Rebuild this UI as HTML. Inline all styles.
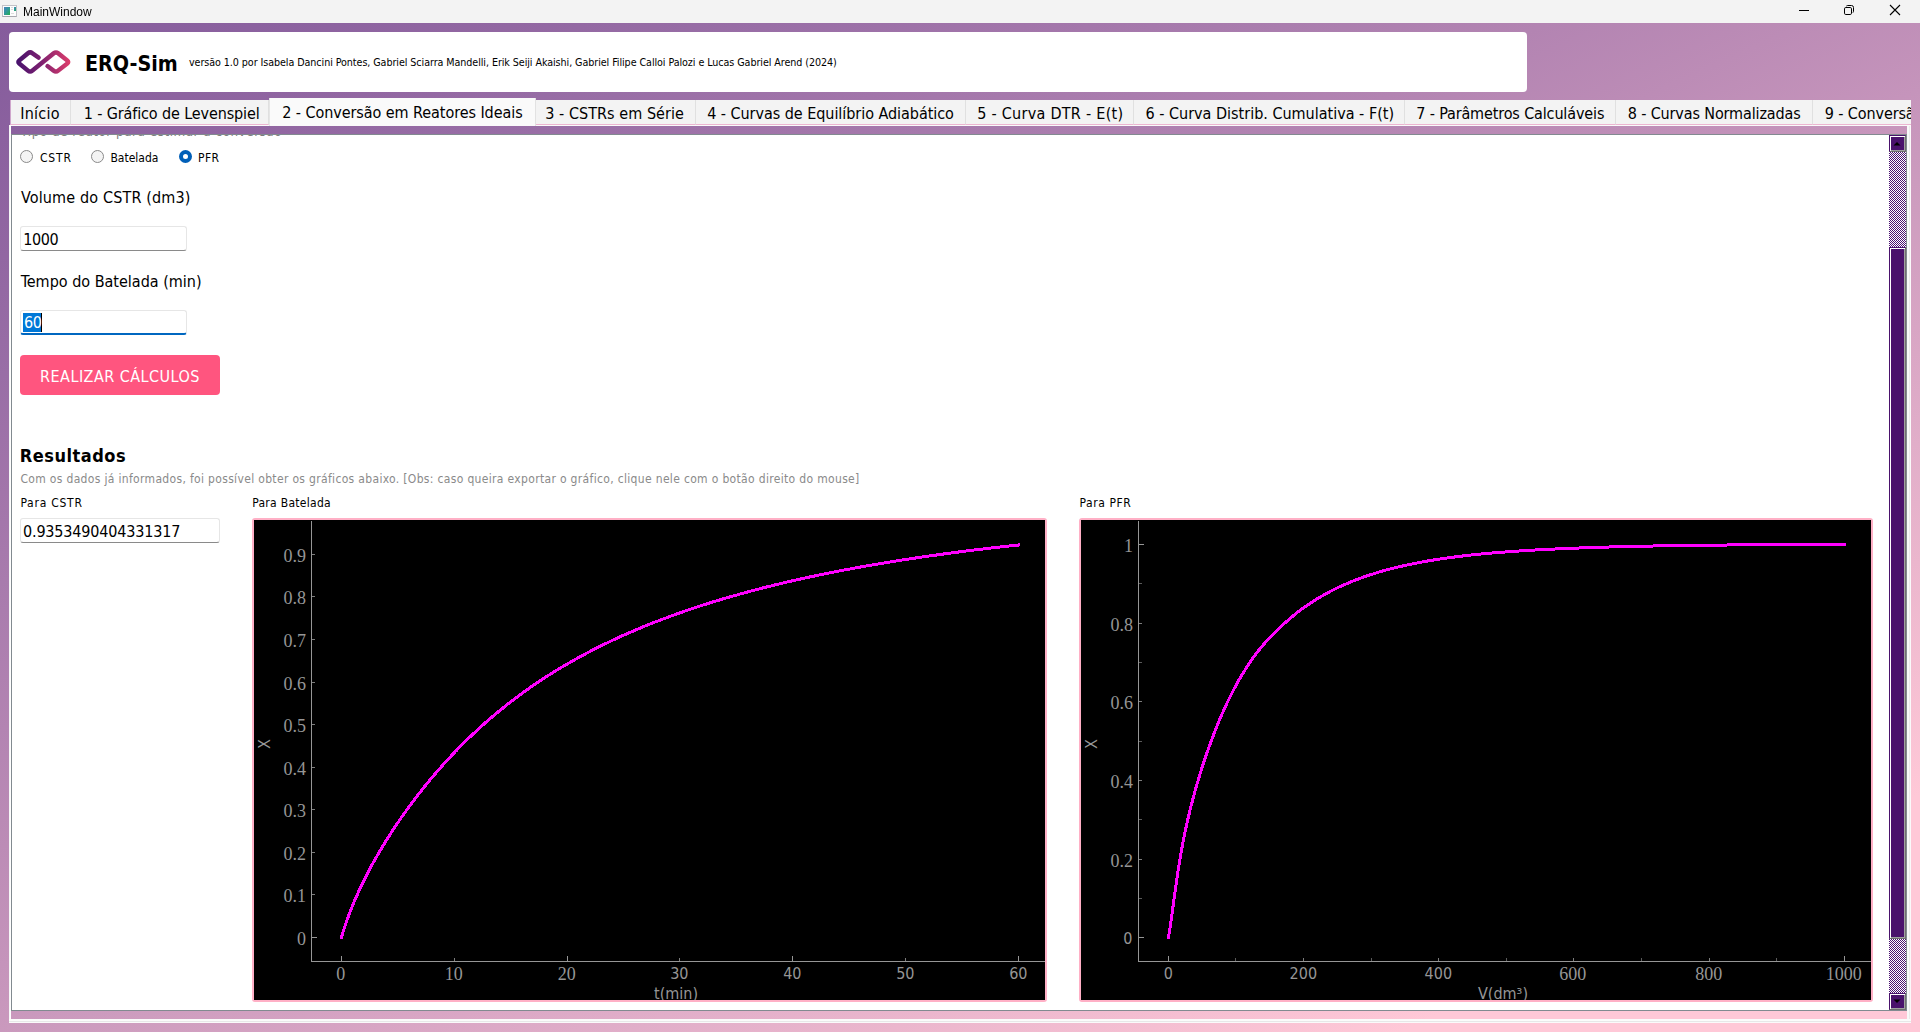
<!DOCTYPE html>
<html lang="pt-BR">
<head>
<meta charset="utf-8">
<title>MainWindow</title>
<style>
*{box-sizing:border-box;margin:0;padding:0}
html,body{width:1920px;height:1032px;overflow:hidden;background:#f3f3f3}
body{font-family:"DejaVu Sans Condensed","DejaVu Sans","Liberation Sans",sans-serif;font-stretch:condensed;color:#000;position:relative}
.abs{position:absolute;white-space:nowrap;line-height:1}
#titlebar{position:absolute;left:0;top:0;width:1920px;height:23px;background:#f3f3f3}
#title{position:absolute;left:22.800px;top:5px;font:12px "Liberation Sans",sans-serif;line-height:14px;color:#000;will-change:transform}
#central{position:absolute;left:0;top:23px;width:1920px;height:1009px;background:linear-gradient(155.47deg,rgb(133,92,156) 0.00%,rgb(139,97,159) 6.25%,rgb(146,103,162) 12.50%,rgb(153,110,166) 18.75%,rgb(162,117,170) 25.00%,rgb(170,125,174) 31.25%,rgb(179,132,178) 37.50%,rgb(188,140,182) 43.75%,rgb(197,148,187) 50.00%,rgb(206,157,191) 56.25%,rgb(216,165,196) 62.50%,rgb(225,174,201) 68.75%,rgb(235,182,205) 75.00%,rgb(245,191,210) 81.25%,rgb(255,200,215) 87.43%,rgb(255,200,215) 100%)}
#header{position:absolute;left:9px;top:32px;width:1518px;height:60px;background:#fff;border-radius:4px}
#brand{left:85px;top:53px;font-size:21.3px;font-weight:bold}
#authors{left:189px;top:58px;font-size:10.67px;letter-spacing:-0.068px}
/* tabs */
#tabbar{position:absolute;left:10px;top:98px;width:1901px;height:28px;overflow:hidden}
#tabbar .pt{position:absolute;left:0;top:27px;width:1901px;height:1px;background:#fafafa}
.tab{position:absolute;top:2px;height:25px;background:#f3f3f3;border-right:1px solid #e0e0e0;border-bottom:1px solid #ecb5d0;font-size:16px;line-height:1;white-space:nowrap}
.tab span{position:absolute;top:6.4px}
.tab.first{border-left:1px solid #cfa6cc}
.tab.sel{top:0;height:28px;background:#fafafa;border:none;border-left:1px solid #e6e6e6;border-right:1px solid #e2e2e2;z-index:2}
.tab.sel span{top:7.4px}
/* pane */
#paneL{position:absolute;left:9px;top:125px;width:2px;height:898px;background:linear-gradient(to right,#f6f8f7 0 50%,#fdfdfd 50% 100%)}
#paneR{position:absolute;left:1907px;top:126px;width:4px;height:897px;background:linear-gradient(to right,#f8faf9 0 50%,#e9ebea 50% 75%,#fafafa 75% 100%)}
#paneB{position:absolute;left:9px;top:1019px;width:1902px;height:4px;background:linear-gradient(to bottom,#fbfcfb 0 50%,#e7e8e8 50% 75%,#fafafa 75% 100%)}
#scroll{position:absolute;left:11px;top:134px;width:1896px;height:877px;background:#fff;border:1px solid #828a90;overflow:hidden}

/* content */
.c{position:absolute;white-space:nowrap;line-height:1;margin-left:.4px}
.f16{font-size:16px}.f12{font-size:12px}
.radio{position:absolute;width:13px;height:13px;border-radius:50%;border:1px solid #8a8a8a;background:#f4f4f4}
.radio.on{border:4px solid #005fb8;background:#fff}
.inp{position:absolute;background:#fff;border:1px solid #e6e6e6;border-bottom:1px solid #8a8a8a;border-radius:3px;font-size:16px}
.inp span{position:absolute;left:3px;top:4px;line-height:1}
#btn{position:absolute;left:8px;top:220px;width:200px;height:40px;background:#ff557f;border-radius:4px;color:#fff;font-size:16px;text-align:center;line-height:43px;letter-spacing:.47px}
.chart{position:absolute;top:383px;height:484px;background:#ffb0c6;border:2px solid #ffb0c6;border-radius:3px}
#sb{position:absolute;left:1877px;top:0;width:17px;height:875px;background:repeating-conic-gradient(#4b1370 0 25%,#fff 0 50%) 1px 0/2px 2px}
.sbb{position:absolute;left:0;width:17px;background:#4a126c;border:1px solid;border-color:#4a126c #6e6e6e #6e6e6e #4a126c;box-shadow:inset 1px 1px 0 #fff,inset -1px -1px 0 #a0a0a0}
</style>
</head>
<body>
<div id="titlebar"><div id="title">MainWindow</div><svg class="abs" style="left:0;top:0" width="1920" height="23" viewBox="0 0 1920 23">
<rect x="2.5" y="5.5" width="14" height="11" fill="#fdfdfd" stroke="#c2c2c8"/><path d="M2.500 16.500h14" stroke="#a8a8ae"/>
<defs><linearGradient id="ig" x1="0" y1="0" x2="1" y2="1"><stop offset="0" stop-color="#4a7fc0"/><stop offset=".5" stop-color="#2f9a98"/><stop offset="1" stop-color="#22b14c"/></linearGradient></defs><rect x="4" y="7" width="6" height="8" fill="url(#ig)"/>
<rect x="14" y="7" width="2" height="4" fill="url(#ig)"/><rect x="11" y="7" width="2" height="1" fill="#ddd"/><rect x="11" y="9" width="2" height="1" fill="#ddd"/><rect x="11" y="13" width="3" height="1" fill="#ddd"/>
<path d="M1799 10.5h10" stroke="#000" stroke-width="1" fill="none"/>
<rect x="1844.5" y="7.500" width="7" height="7" rx="1.3" stroke="#000" stroke-width="1" fill="none"/><path d="M1846.300 6.200q.5-.7 1.400-.7h3.800a2 2 0 0 1 2 2v3.800q0 .9-.7 1.400" stroke="#000" stroke-width="1" fill="none"/>
<path d="M1890 5l10 10M1900 5l-10 10" stroke="#000" stroke-width="1.1" fill="none"/>
</svg></div>
<div id="central"></div>
<div id="header"></div>
<svg class="abs" style="left:10px;top:42px" width="70" height="40" viewBox="10 42 70 40">
<defs><linearGradient id="lg" gradientUnits="userSpaceOnUse" x1="16" y1="0" x2="70" y2="0"><stop offset="0" stop-color="#43106c"/><stop offset="0.45" stop-color="#7a1f70"/><stop offset="1" stop-color="#e33f6b"/></linearGradient></defs>
<path d="M38.5 57.6 L32.6 53.2 Q30.5 51.6 28.4 53.3 L20.2 60.4 Q18.4 62 20.2 63.6 L28.4 70.6 Q30.5 72.4 32.6 70.6 L53.1 53.3 Q55.2 51.6 57.3 53.3 L65.9 60.4 Q67.8 62 65.9 63.6 L57.3 70.6 Q55.2 72.4 53.1 70.7 L47.2 66.1" transform="translate(43.05 62) scale(1.045 1.005) translate(-42.85 -62)" fill="none" stroke="url(#lg)" stroke-width="4.4" stroke-linecap="round" stroke-linejoin="round"/>
</svg>
<div class="abs" id="brand">ERQ-Sim</div>
<div class="abs" id="authors">versão 1.0 por Isabela Dancini Pontes, Gabriel Sciarra Mandelli, Erik Seiji Akaishi, Gabriel Filipe Calloi Palozi e Lucas Gabriel Arend (2024)</div>
<div id="tabbar">
<div class="pt"></div>
<div class="tab first" style="left:0px;width:61px"><span style="left:9.2px;letter-spacing:0.250px">Início</span></div>
<div class="tab" style="left:61px;width:198px"><span style="left:12.7px;letter-spacing:-0.120px">1 - Gráfico de Levenspiel</span></div>
<div class="tab sel" style="left:259px;width:267px"><span style="left:12.2px;letter-spacing:-0.062px">2 - Conversão em Reatores Ideais</span></div>
<div class="tab" style="left:526px;width:160px"><span style="left:9.2px;letter-spacing:0.056px">3 - CSTRs em Série</span></div>
<div class="tab" style="left:686px;width:270px"><span style="left:11.2px;letter-spacing:-0.043px">4 - Curvas de Equilíbrio Adiabático</span></div>
<div class="tab" style="left:956px;width:168px"><span style="left:11.2px;letter-spacing:0.275px">5 - Curva DTR - E(t)</span></div>
<div class="tab" style="left:1124px;width:271px"><span style="left:11.5px">6 - Curva Distrib. Cumulativa - F(t)</span></div>
<div class="tab" style="left:1395px;width:211px"><span style="left:11.2px;letter-spacing:-0.135px">7 - Parâmetros Calculáveis</span></div>
<div class="tab" style="left:1606px;width:197px"><span style="left:11.7px;letter-spacing:-0.130px">8 - Curvas Normalizadas</span></div>
<div class="tab" style="left:1803px;width:347px"><span style="left:11.7px;letter-spacing:-0.100px">9 - Conversão em Reatores Não Isotérmicos</span></div>
</div>
<div id="paneL"></div><div id="paneR"></div><div id="paneB"></div>
<div id="scroll">
<div class="c" id="clip" style="left:8px;top:-10px;color:#7c7c7c;font-size:13.33px;letter-spacing:.52px">Tipo de reator para estimar a conversão</div>
<div class="radio" style="left:8px;top:15px"></div><div class="c f12" style="left:27.5px;top:17px;letter-spacing:.85px">CSTR</div>
<div class="radio" style="left:79px;top:15px"></div><div class="c f12" style="left:98px;top:17px">Batelada</div>
<div class="radio on" style="left:167px;top:15px"></div><div class="c f12" style="left:185.5px;top:17px;letter-spacing:.5px">PFR</div>
<div class="c f16" style="left:8.6px;top:55px;letter-spacing:.15px">Volume do CSTR (dm3)</div>
<div class="inp" style="left:8px;top:91px;width:167px;height:25px"><span style="left:2.3px;top:5px;letter-spacing:-.4px">1000</span></div>
<div class="c f16" style="left:8.3px;top:139px">Tempo do Batelada (min)</div>
<div class="inp" style="left:8px;top:175px;width:167px;height:25px;border-bottom:2px solid #0067c0"><span style="background:#0078d7;color:#fff;left:2px;top:2px;height:19px;line-height:20px;padding:0 1px 0 1px;border-right:1px solid #000;width:19px;letter-spacing:-.3px">60</span></div>
<div id="btn">REALIZAR CÁLCULOS</div>
<div class="c" style="left:8px;top:312px;font-size:18px;font-weight:bold;letter-spacing:.5px;margin-left:-.2px">Resultados</div>
<div class="c f12" style="left:8px;top:338px;color:#8a8a8a;letter-spacing:.33px">Com os dados já informados, foi possível obter os gráficos abaixo. [Obs: caso queira exportar o gráfico, clique nele com o botão direito do mouse]</div>
<div class="c f12" style="left:8px;top:362px;letter-spacing:.75px">Para CSTR</div>
<div class="c f12" style="left:239.8px;top:362px;letter-spacing:.29px">Para Batelada</div>
<div class="c f12" style="left:1067px;top:362px;letter-spacing:.59px">Para PFR</div>
<div class="inp" style="left:8px;top:383px;width:200px;height:25px"><span style="left:2px;top:4.5px;letter-spacing:-.17px">0.9353490404331317</span></div>
<div class="chart" id="ch1" style="left:240px;width:795px"><svg width="791" height="480" viewBox="254 520 791 480" style="display:block;background:#000">
<g shape-rendering="crispEdges">
<rect x="311" y="521" width="1" height="441" fill="#969696"/>
<rect x="311" y="961" width="734" height="1" fill="#969696"/>
<rect x="312" y="937" width="5" height="1" fill="#969696"/>
<rect x="312" y="894" width="3" height="1" fill="#7c7c7c"/>
<rect x="312" y="852" width="3" height="1" fill="#7c7c7c"/>
<rect x="312" y="809" width="3" height="1" fill="#7c7c7c"/>
<rect x="312" y="767" width="3" height="1" fill="#7c7c7c"/>
<rect x="312" y="724" width="3" height="1" fill="#7c7c7c"/>
<rect x="312" y="682" width="3" height="1" fill="#7c7c7c"/>
<rect x="312" y="639" width="3" height="1" fill="#7c7c7c"/>
<rect x="312" y="596" width="3" height="1" fill="#7c7c7c"/>
<rect x="312" y="554" width="3" height="1" fill="#7c7c7c"/>
<rect x="341" y="956" width="1" height="5" fill="#969696"/>
<rect x="454" y="958" width="1" height="3" fill="#7c7c7c"/>
<rect x="567" y="956" width="1" height="5" fill="#969696"/>
<rect x="679" y="958" width="1" height="3" fill="#7c7c7c"/>
<rect x="792" y="956" width="1" height="5" fill="#969696"/>
<rect x="905" y="958" width="1" height="3" fill="#7c7c7c"/>
<rect x="1018" y="956" width="1" height="5" fill="#969696"/>
<path d="M341.5 937.4 L342.0 935.5 L342.6 933.6 L343.2 931.6 L343.8 929.7 L344.4 927.8 L345.0 925.9 L345.6 924.0 L346.3 922.1 L346.9 920.2 L347.6 918.4 L348.3 916.5 L349.0 914.6 L349.7 912.7 L350.4 910.9 L351.2 909.0 L351.9 907.2 L352.6 905.3 L353.4 903.4 L354.2 901.6 L355.0 899.8 L355.8 897.9 L356.6 896.1 L357.4 894.3 L358.2 892.4 L359.0 890.6 L359.9 888.8 L360.7 887.0 L361.6 885.2 L362.5 883.4 L363.3 881.6 L364.2 879.8 L365.1 878.0 L366.0 876.2 L366.9 874.5 L367.9 872.7 L368.8 870.9 L369.7 869.1 L370.7 867.4 L371.6 865.6 L372.6 863.9 L373.5 862.1 L374.5 860.4 L375.5 858.6 L376.5 856.9 L377.5 855.2 L378.5 853.4 L379.5 851.7 L380.5 850.0 L381.5 848.3 L382.6 846.5 L383.6 844.8 L384.6 843.1 L385.7 841.4 L386.7 839.7 L387.8 838.0 L388.9 836.3 L389.9 834.6 L391.0 833.0 L392.1 831.3 L393.2 829.6 L394.3 827.9 L395.4 826.3 L396.5 824.6 L397.7 823.0 L398.8 821.3 L399.9 819.7 L401.0 818.0 L402.2 816.4 L403.3 814.7 L404.5 813.1 L405.7 811.5 L406.8 809.8 L408.0 808.2 L409.2 806.6 L410.4 805.0 L411.5 803.4 L412.7 801.8 L413.9 800.2 L415.2 798.6 L416.4 797.0 L417.6 795.4 L418.8 793.8 L420.0 792.3 L421.3 790.7 L422.5 789.1 L423.8 787.6 L425.0 786.0 L426.3 784.5 L427.5 782.9 L428.8 781.4 L430.1 779.8 L431.4 778.3 L432.7 776.8 L434.0 775.2 L435.3 773.7 L436.6 772.2 L437.9 770.7 L439.2 769.2 L440.5 767.7 L441.8 766.2 L443.2 764.7 L444.5 763.2 L445.8 761.7 L447.2 760.2 L448.6 758.8 L449.9 757.3 L451.3 755.8 L452.6 754.4 L454.0 752.9 L455.4 751.5 L456.8 750.1 L458.2 748.6 L459.6 747.2 L461.0 745.8 L462.4 744.3 L463.8 742.9 L465.2 741.5 L466.7 740.1 L468.1 738.7 L469.5 737.3 L471.0 736.0 L472.4 734.6 L473.9 733.2 L475.4 731.8 L476.8 730.5 L478.3 729.1 L479.8 727.8 L481.2 726.4 L482.7 725.1 L484.2 723.8 L485.7 722.4 L487.2 721.1 L488.7 719.8 L490.3 718.5 L491.8 717.2 L493.3 715.9 L494.8 714.6 L496.4 713.3 L497.9 712.1 L499.4 710.8 L501.0 709.5 L502.6 708.3 L504.1 707.0 L505.7 705.8 L507.2 704.5 L508.8 703.3 L510.4 702.1 L512.0 700.9 L513.6 699.6 L515.2 698.4 L516.8 697.2 L518.4 696.0 L520.0 694.9 L521.6 693.7 L523.2 692.5 L524.8 691.3 L526.5 690.2 L528.1 689.0 L529.7 687.9 L531.4 686.7 L533.0 685.6 L534.7 684.4 L536.3 683.3 L538.0 682.2 L539.7 681.1 L541.3 680.0 L543.0 678.9 L544.7 677.8 L546.3 676.7 L548.0 675.6 L549.7 674.6 L551.4 673.5 L553.1 672.4 L554.8 671.4 L556.5 670.3 L558.2 669.3 L559.9 668.3 L561.6 667.2 L563.4 666.2 L565.1 665.2 L566.8 664.2 L568.6 663.2 L570.3 662.2 L572.0 661.2 L573.8 660.2 L575.5 659.3 L577.3 658.3 L579.0 657.3 L580.8 656.4 L582.5 655.4 L584.3 654.5 L586.1 653.5 L587.8 652.6 L589.6 651.7 L591.4 650.7 L593.1 649.8 L594.9 648.9 L596.7 648.0 L598.5 647.1 L600.3 646.2 L602.1 645.3 L603.9 644.4 L605.7 643.6 L607.5 642.7 L609.3 641.8 L611.1 641.0 L612.9 640.1 L614.7 639.3 L616.5 638.4 L618.3 637.6 L620.2 636.8 L622.0 635.9 L623.8 635.1 L625.6 634.3 L627.5 633.5 L629.3 632.7 L631.1 631.9 L633.0 631.1 L634.8 630.3 L636.6 629.6 L638.5 628.8 L640.3 628.0 L642.2 627.2 L644.0 626.5 L645.9 625.7 L647.7 625.0 L649.6 624.2 L651.5 623.5 L653.3 622.8 L655.2 622.0 L657.0 621.3 L658.9 620.6 L660.8 619.9 L662.6 619.2 L664.5 618.5 L666.4 617.8 L668.3 617.1 L670.1 616.4 L672.0 615.7 L673.9 615.0 L675.8 614.3 L677.7 613.7 L679.5 613.0 L681.4 612.3 L683.3 611.7 L685.2 611.0 L687.1 610.4 L689.0 609.7 L690.9 609.1 L692.8 608.4 L694.7 607.8 L696.6 607.2 L698.5 606.6 L700.4 605.9 L702.3 605.3 L704.2 604.7 L706.1 604.1 L708.0 603.5 L709.9 602.9 L711.8 602.3 L713.7 601.7 L715.7 601.1 L717.6 600.6 L719.5 600.0 L721.4 599.4 L723.3 598.8 L725.2 598.3 L727.2 597.7 L729.1 597.1 L731.0 596.6 L732.9 596.0 L734.8 595.5 L736.8 595.0 L738.7 594.4 L740.6 593.9 L742.5 593.3 L744.5 592.8 L746.4 592.3 L748.3 591.8 L750.3 591.2 L752.2 590.7 L754.1 590.2 L756.1 589.7 L758.0 589.2 L759.9 588.7 L761.9 588.2 L763.8 587.7 L765.8 587.2 L767.7 586.7 L769.6 586.3 L771.6 585.8 L773.5 585.3 L775.5 584.8 L777.4 584.4 L779.3 583.9 L781.3 583.4 L783.2 583.0 L785.2 582.5 L787.1 582.0 L789.1 581.6 L791.0 581.1 L793.0 580.7 L794.9 580.3 L796.9 579.8 L798.8 579.4 L800.8 578.9 L802.7 578.5 L804.7 578.1 L806.6 577.7 L808.6 577.2 L810.6 576.8 L812.5 576.4 L814.5 576.0 L816.4 575.6 L818.4 575.2 L820.3 574.7 L822.3 574.3 L824.3 573.9 L826.2 573.5 L828.2 573.1 L830.1 572.8 L832.1 572.4 L834.1 572.0 L836.0 571.6 L838.0 571.2 L840.0 570.8 L841.9 570.5 L843.9 570.1 L845.8 569.7 L847.8 569.3 L849.8 569.0 L851.7 568.6 L853.7 568.2 L855.7 567.9 L857.6 567.5 L859.6 567.2 L861.6 566.8 L863.5 566.5 L865.5 566.1 L867.5 565.8 L869.5 565.4 L871.4 565.1 L873.4 564.7 L875.4 564.4 L877.3 564.1 L879.3 563.7 L881.3 563.4 L883.3 563.1 L885.2 562.7 L887.2 562.4 L889.2 562.1 L891.2 561.8 L893.1 561.5 L895.1 561.1 L897.1 560.8 L899.1 560.5 L901.0 560.2 L903.0 559.9 L905.0 559.6 L907.0 559.3 L908.9 559.0 L910.9 558.7 L912.9 558.4 L914.9 558.1 L916.8 557.8 L918.8 557.5 L920.8 557.2 L922.8 556.9 L924.8 556.6 L926.7 556.4 L928.7 556.1 L930.7 555.8 L932.7 555.5 L934.7 555.2 L936.6 555.0 L938.6 554.7 L940.6 554.4 L942.6 554.1 L944.6 553.9 L946.6 553.6 L948.5 553.3 L950.5 553.1 L952.5 552.8 L954.5 552.6 L956.5 552.3 L958.5 552.0 L960.4 551.8 L962.4 551.5 L964.4 551.3 L966.4 551.0 L968.4 550.8 L970.4 550.5 L972.3 550.3 L974.3 550.0 L976.3 549.8 L978.3 549.6 L980.3 549.3 L982.3 549.1 L984.3 548.8 L986.2 548.6 L988.2 548.4 L990.2 548.1 L992.2 547.9 L994.2 547.7 L996.2 547.5 L998.2 547.2 L1000.1 547.0 L1002.1 546.8 L1004.1 546.6 L1006.1 546.4 L1008.1 546.1 L1010.1 545.9 L1012.1 545.7 L1014.1 545.5 L1016.1 545.3 L1018.0 545.1 L1018.5 545.0" fill="none" stroke="#f0f" stroke-width="3" stroke-linecap="square" stroke-linejoin="round"/>
</g>
<g fill="#969696">
<text x="306" y="945.0" text-anchor="end" font-family="Liberation Serif,serif" font-size="18">0</text>
<text x="306" y="902.0" text-anchor="end" font-family="Liberation Serif,serif" font-size="18">0.1</text>
<text x="306" y="860.0" text-anchor="end" font-family="Liberation Serif,serif" font-size="18">0.2</text>
<text x="306" y="817.0" text-anchor="end" font-family="Liberation Serif,serif" font-size="18">0.3</text>
<text x="306" y="775.0" text-anchor="end" font-family="Liberation Serif,serif" font-size="18">0.4</text>
<text x="306" y="732.0" text-anchor="end" font-family="Liberation Serif,serif" font-size="18">0.5</text>
<text x="306" y="690.0" text-anchor="end" font-family="Liberation Serif,serif" font-size="18">0.6</text>
<text x="306" y="647.0" text-anchor="end" font-family="Liberation Serif,serif" font-size="18">0.7</text>
<text x="306" y="604.0" text-anchor="end" font-family="Liberation Serif,serif" font-size="18">0.8</text>
<text x="306" y="562.0" text-anchor="end" font-family="Liberation Serif,serif" font-size="18">0.9</text>
<text x="340.8" y="980.4" text-anchor="middle" font-family="Liberation Serif,serif" font-size="18">0</text>
<text x="453.8" y="980.4" text-anchor="middle" font-family="Liberation Serif,serif" font-size="18">10</text>
<text x="566.8" y="980.4" text-anchor="middle" font-family="Liberation Serif,serif" font-size="18">20</text>
<text x="679.3" y="979.4" text-anchor="middle" font-family="DejaVu Sans Condensed,DejaVu Sans,Liberation Sans,sans-serif" font-stretch="condensed" font-size="16">30</text>
<text x="792.3" y="979.4" text-anchor="middle" font-family="DejaVu Sans Condensed,DejaVu Sans,Liberation Sans,sans-serif" font-stretch="condensed" font-size="16">40</text>
<text x="905.3" y="979.4" text-anchor="middle" font-family="DejaVu Sans Condensed,DejaVu Sans,Liberation Sans,sans-serif" font-stretch="condensed" font-size="16">50</text>
<text x="1018.3" y="979.4" text-anchor="middle" font-family="DejaVu Sans Condensed,DejaVu Sans,Liberation Sans,sans-serif" font-stretch="condensed" font-size="16">60</text>
<text x="676" y="999" text-anchor="middle" font-family="DejaVu Sans Condensed,DejaVu Sans,Liberation Sans,sans-serif" font-stretch="condensed" font-size="16">t(min)</text>
<text transform="translate(270 744) rotate(-90)" text-anchor="middle" font-family="DejaVu Sans Condensed,DejaVu Sans,Liberation Sans,sans-serif" font-stretch="condensed" font-size="16">X</text>
</g></svg></div>
<div class="chart" id="ch2" style="left:1067px;width:794px"><svg width="790" height="480" viewBox="1081 520 790 480" style="display:block;background:#000">
<g shape-rendering="crispEdges">
<rect x="1138" y="521" width="1" height="441" fill="#969696"/>
<rect x="1138" y="961" width="733" height="1" fill="#969696"/>
<rect x="1139" y="937" width="5" height="1" fill="#969696"/>
<rect x="1139" y="898" width="3" height="1" fill="#5a5a5a"/>
<rect x="1139" y="859" width="3" height="1" fill="#7c7c7c"/>
<rect x="1139" y="819" width="3" height="1" fill="#5a5a5a"/>
<rect x="1139" y="780" width="3" height="1" fill="#7c7c7c"/>
<rect x="1139" y="741" width="3" height="1" fill="#5a5a5a"/>
<rect x="1139" y="701" width="3" height="1" fill="#7c7c7c"/>
<rect x="1139" y="662" width="3" height="1" fill="#5a5a5a"/>
<rect x="1139" y="623" width="3" height="1" fill="#7c7c7c"/>
<rect x="1139" y="583" width="3" height="1" fill="#5a5a5a"/>
<rect x="1139" y="544" width="5" height="1" fill="#969696"/>
<rect x="1168" y="956" width="1" height="5" fill="#969696"/>
<rect x="1235" y="958" width="1" height="3" fill="#5a5a5a"/>
<rect x="1303" y="958" width="1" height="3" fill="#7c7c7c"/>
<rect x="1371" y="958" width="1" height="3" fill="#5a5a5a"/>
<rect x="1438" y="958" width="1" height="3" fill="#7c7c7c"/>
<rect x="1506" y="958" width="1" height="3" fill="#5a5a5a"/>
<rect x="1573" y="958" width="1" height="3" fill="#7c7c7c"/>
<rect x="1641" y="958" width="1" height="3" fill="#5a5a5a"/>
<rect x="1709" y="958" width="1" height="3" fill="#7c7c7c"/>
<rect x="1776" y="958" width="1" height="3" fill="#5a5a5a"/>
<rect x="1844" y="956" width="1" height="5" fill="#969696"/>
<path d="M1168.5 937.5 L1168.8 935.5 L1169.1 933.6 L1169.5 931.6 L1169.8 929.6 L1170.1 927.6 L1170.4 925.6 L1170.6 923.7 L1170.9 921.7 L1171.2 919.7 L1171.5 917.7 L1171.8 915.7 L1172.0 913.8 L1172.3 911.8 L1172.6 909.8 L1172.8 907.8 L1173.1 905.8 L1173.4 903.9 L1173.6 901.9 L1173.9 899.9 L1174.2 897.9 L1174.4 895.9 L1174.7 893.9 L1175.0 892.0 L1175.3 890.0 L1175.5 888.0 L1175.8 886.0 L1176.1 884.0 L1176.4 882.1 L1176.7 880.1 L1177.0 878.1 L1177.2 876.1 L1177.5 874.1 L1177.8 872.2 L1178.1 870.2 L1178.5 868.2 L1178.8 866.2 L1179.1 864.3 L1179.4 862.3 L1179.7 860.3 L1180.1 858.3 L1180.4 856.4 L1180.8 854.4 L1181.1 852.4 L1181.5 850.5 L1181.8 848.5 L1182.2 846.5 L1182.6 844.6 L1182.9 842.6 L1183.3 840.6 L1183.7 838.7 L1184.1 836.7 L1184.5 834.8 L1184.9 832.8 L1185.3 830.8 L1185.7 828.9 L1186.2 826.9 L1186.6 825.0 L1187.0 823.0 L1187.5 821.1 L1187.9 819.1 L1188.4 817.2 L1188.8 815.2 L1189.3 813.3 L1189.8 811.3 L1190.2 809.4 L1190.7 807.5 L1191.2 805.5 L1191.7 803.6 L1192.2 801.6 L1192.7 799.7 L1193.2 797.8 L1193.7 795.8 L1194.3 793.9 L1194.8 792.0 L1195.3 790.1 L1195.9 788.1 L1196.4 786.2 L1197.0 784.3 L1197.5 782.4 L1198.1 780.5 L1198.7 778.5 L1199.2 776.6 L1199.8 774.7 L1200.4 772.8 L1201.0 770.9 L1201.6 769.0 L1202.2 767.1 L1202.8 765.2 L1203.5 763.3 L1204.1 761.4 L1204.7 759.5 L1205.3 757.6 L1206.0 755.7 L1206.6 753.8 L1207.3 751.9 L1208.0 750.0 L1208.6 748.1 L1209.3 746.2 L1210.0 744.4 L1210.7 742.5 L1211.4 740.6 L1212.1 738.7 L1212.8 736.9 L1213.5 735.0 L1214.2 733.1 L1214.9 731.3 L1215.6 729.4 L1216.4 727.5 L1217.1 725.7 L1217.9 723.8 L1218.7 722.0 L1219.4 720.1 L1220.2 718.3 L1221.0 716.5 L1221.8 714.6 L1222.6 712.8 L1223.4 711.0 L1224.2 709.1 L1225.0 707.3 L1225.9 705.5 L1226.7 703.7 L1227.6 701.9 L1228.4 700.1 L1229.3 698.3 L1230.2 696.5 L1231.1 694.7 L1232.0 692.9 L1232.9 691.1 L1233.8 689.4 L1234.8 687.6 L1235.7 685.8 L1236.7 684.1 L1237.6 682.3 L1238.6 680.6 L1239.6 678.8 L1240.6 677.1 L1241.6 675.4 L1242.7 673.7 L1243.7 672.0 L1244.8 670.3 L1245.8 668.6 L1246.9 666.9 L1248.0 665.2 L1249.1 663.6 L1250.2 661.9 L1251.4 660.3 L1252.5 658.6 L1253.7 657.0 L1254.9 655.4 L1256.1 653.8 L1257.3 652.2 L1258.5 650.6 L1259.8 649.1 L1261.1 647.5 L1262.3 646.0 L1263.6 644.5 L1264.9 643.0 L1266.3 641.5 L1267.6 640.0 L1269.0 638.5 L1270.3 637.0 L1271.7 635.6 L1273.1 634.1 L1274.5 632.7 L1275.9 631.3 L1277.3 629.9 L1278.8 628.5 L1280.2 627.1 L1281.7 625.8 L1283.2 624.4 L1284.7 623.1 L1286.2 621.8 L1287.7 620.5 L1289.2 619.2 L1290.7 617.9 L1292.3 616.6 L1293.8 615.3 L1295.4 614.1 L1296.9 612.8 L1298.5 611.6 L1300.1 610.4 L1301.7 609.2 L1303.3 608.0 L1304.9 606.9 L1306.6 605.7 L1308.2 604.6 L1309.9 603.5 L1311.6 602.4 L1313.2 601.3 L1314.9 600.2 L1316.6 599.1 L1318.3 598.1 L1320.1 597.1 L1321.8 596.1 L1323.5 595.1 L1325.3 594.1 L1327.0 593.1 L1328.8 592.2 L1330.5 591.3 L1332.3 590.3 L1334.1 589.4 L1335.9 588.6 L1337.7 587.7 L1339.5 586.8 L1341.3 586.0 L1343.2 585.2 L1345.0 584.4 L1346.8 583.6 L1348.7 582.8 L1350.5 582.0 L1352.4 581.3 L1354.2 580.5 L1356.1 579.8 L1358.0 579.1 L1359.8 578.4 L1361.7 577.7 L1363.6 577.0 L1365.5 576.4 L1367.4 575.7 L1369.3 575.1 L1371.2 574.5 L1373.1 573.9 L1375.0 573.3 L1376.9 572.7 L1378.8 572.1 L1380.7 571.6 L1382.7 571.0 L1384.6 570.5 L1386.5 569.9 L1388.4 569.4 L1390.4 568.9 L1392.3 568.4 L1394.3 567.9 L1396.2 567.5 L1398.1 567.0 L1400.1 566.5 L1402.0 566.1 L1404.0 565.6 L1405.9 565.2 L1407.9 564.8 L1409.9 564.4 L1411.8 564.0 L1413.8 563.6 L1415.7 563.2 L1417.7 562.8 L1419.7 562.4 L1421.6 562.1 L1423.6 561.7 L1425.6 561.4 L1427.5 561.0 L1429.5 560.7 L1431.5 560.4 L1433.5 560.0 L1435.4 559.7 L1437.4 559.4 L1439.4 559.1 L1441.4 558.8 L1443.3 558.5 L1445.3 558.2 L1447.3 558.0 L1449.3 557.7 L1451.3 557.4 L1453.2 557.2 L1455.2 556.9 L1457.2 556.7 L1459.2 556.4 L1461.2 556.2 L1463.2 555.9 L1465.2 555.7 L1467.1 555.5 L1469.1 555.3 L1471.1 555.0 L1473.1 554.8 L1475.1 554.6 L1477.1 554.4 L1479.1 554.2 L1481.1 554.0 L1483.1 553.8 L1485.0 553.6 L1487.0 553.5 L1489.0 553.3 L1491.0 553.1 L1493.0 552.9 L1495.0 552.8 L1497.0 552.6 L1499.0 552.4 L1501.0 552.3 L1503.0 552.1 L1505.0 552.0 L1507.0 551.8 L1509.0 551.7 L1511.0 551.5 L1513.0 551.4 L1515.0 551.2 L1516.9 551.1 L1518.9 551.0 L1520.9 550.8 L1522.9 550.7 L1524.9 550.6 L1526.9 550.5 L1528.9 550.3 L1530.9 550.2 L1532.9 550.1 L1534.9 550.0 L1536.9 549.9 L1538.9 549.8 L1540.9 549.7 L1542.9 549.5 L1544.9 549.4 L1546.9 549.3 L1548.9 549.2 L1550.9 549.1 L1552.9 549.1 L1554.9 549.0 L1556.9 548.9 L1558.9 548.8 L1560.9 548.7 L1562.9 548.6 L1564.9 548.5 L1566.9 548.4 L1568.9 548.3 L1570.9 548.3 L1572.9 548.2 L1574.9 548.1 L1576.9 548.0 L1578.9 548.0 L1580.9 547.9 L1582.9 547.8 L1584.9 547.7 L1586.9 547.7 L1588.9 547.6 L1590.9 547.5 L1592.9 547.5 L1594.9 547.4 L1596.9 547.3 L1598.9 547.3 L1600.9 547.2 L1602.9 547.2 L1604.9 547.1 L1606.8 547.0 L1608.8 547.0 L1610.8 546.9 L1612.8 546.9 L1614.8 546.8 L1616.8 546.8 L1618.8 546.7 L1620.8 546.7 L1622.8 546.6 L1624.8 546.6 L1626.8 546.5 L1628.8 546.5 L1630.8 546.4 L1632.8 546.4 L1634.8 546.3 L1636.8 546.3 L1638.8 546.3 L1640.8 546.2 L1642.8 546.2 L1644.8 546.1 L1646.8 546.1 L1648.8 546.1 L1650.8 546.0 L1652.8 546.0 L1654.8 545.9 L1656.8 545.9 L1658.8 545.9 L1660.8 545.8 L1662.8 545.8 L1664.8 545.8 L1666.8 545.7 L1668.8 545.7 L1670.8 545.7 L1672.8 545.6 L1674.8 545.6 L1676.8 545.6 L1678.8 545.5 L1680.8 545.5 L1682.8 545.5 L1684.8 545.5 L1686.8 545.4 L1688.8 545.4 L1690.8 545.4 L1692.8 545.3 L1694.8 545.3 L1696.8 545.3 L1698.8 545.3 L1700.8 545.2 L1702.8 545.2 L1704.8 545.2 L1706.8 545.2 L1708.8 545.1 L1710.8 545.1 L1712.8 545.1 L1714.8 545.1 L1716.8 545.1 L1718.8 545.0 L1720.8 545.0 L1722.8 545.0 L1724.8 545.0 L1726.8 545.0 L1728.8 544.9 L1730.8 544.9 L1732.8 544.9 L1734.8 544.9 L1736.8 544.9 L1738.8 544.8 L1740.8 544.8 L1742.8 544.8 L1744.8 544.8 L1746.8 544.8 L1748.8 544.8 L1750.8 544.7 L1752.8 544.7 L1754.8 544.7 L1756.8 544.7 L1758.8 544.7 L1760.8 544.7 L1762.8 544.7 L1764.8 544.6 L1766.8 544.6 L1768.8 544.6 L1770.8 544.6 L1772.8 544.6 L1774.8 544.6 L1776.8 544.6 L1778.8 544.5 L1780.8 544.5 L1782.8 544.5 L1784.8 544.5 L1786.8 544.5 L1788.8 544.5 L1790.8 544.5 L1792.8 544.5 L1794.8 544.5 L1796.8 544.4 L1798.8 544.4 L1800.8 544.4 L1802.8 544.4 L1804.8 544.4 L1806.8 544.4 L1808.8 544.4 L1810.8 544.4 L1812.8 544.4 L1814.8 544.4 L1816.8 544.3 L1818.8 544.3 L1820.8 544.3 L1822.8 544.3 L1824.8 544.3 L1826.8 544.3 L1828.8 544.3 L1830.8 544.3 L1832.8 544.3 L1834.8 544.3 L1836.8 544.3 L1838.8 544.3 L1840.8 544.2 L1842.8 544.2 L1844.5 544.2" fill="none" stroke="#f0f" stroke-width="3" stroke-linecap="square" stroke-linejoin="round"/>
</g>
<g fill="#969696">
<text x="1132.5" y="944.4" text-anchor="end" font-family="DejaVu Sans Condensed,DejaVu Sans,Liberation Sans,sans-serif" font-stretch="condensed" font-size="16">0</text>
<text x="1133" y="867.0" text-anchor="end" font-family="Liberation Serif,serif" font-size="18">0.2</text>
<text x="1133" y="788.0" text-anchor="end" font-family="Liberation Serif,serif" font-size="18">0.4</text>
<text x="1133" y="709.0" text-anchor="end" font-family="Liberation Serif,serif" font-size="18">0.6</text>
<text x="1133" y="631.0" text-anchor="end" font-family="Liberation Serif,serif" font-size="18">0.8</text>
<text x="1133" y="552.0" text-anchor="end" font-family="Liberation Serif,serif" font-size="18">1</text>
<text x="1168.3" y="979.4" text-anchor="middle" font-family="DejaVu Sans Condensed,DejaVu Sans,Liberation Sans,sans-serif" font-stretch="condensed" font-size="16">0</text>
<text x="1303.3" y="979.4" text-anchor="middle" font-family="DejaVu Sans Condensed,DejaVu Sans,Liberation Sans,sans-serif" font-stretch="condensed" font-size="16">200</text>
<text x="1438.3" y="979.4" text-anchor="middle" font-family="DejaVu Sans Condensed,DejaVu Sans,Liberation Sans,sans-serif" font-stretch="condensed" font-size="16">400</text>
<text x="1572.8" y="980.4" text-anchor="middle" font-family="Liberation Serif,serif" font-size="18">600</text>
<text x="1708.8" y="980.4" text-anchor="middle" font-family="Liberation Serif,serif" font-size="18">800</text>
<text x="1843.8" y="980.4" text-anchor="middle" font-family="Liberation Serif,serif" font-size="18">1000</text>
<text x="1503" y="999" text-anchor="middle" font-family="DejaVu Sans Condensed,DejaVu Sans,Liberation Sans,sans-serif" font-stretch="condensed" font-size="16">V(dm³)</text>
<text transform="translate(1097 744) rotate(-90)" text-anchor="middle" font-family="DejaVu Sans Condensed,DejaVu Sans,Liberation Sans,sans-serif" font-stretch="condensed" font-size="16">X</text>
</g></svg></div>
<div id="sb"><div class="sbb" style="top:0;height:17px"><svg width="15" height="15" style="position:absolute;left:0;top:0"><path d="M3.500 9.500h7l-3.500-3.500z" fill="#000"/></svg></div><div class="sbb" style="top:112px;height:692px"></div><div class="sbb" style="top:858px;height:17px"><svg width="15" height="15" style="position:absolute;left:0;top:0"><path d="M3.500 5.500h7l-3.500 3.500z" fill="#000"/></svg></div></div>
</div>
</body>
</html>
